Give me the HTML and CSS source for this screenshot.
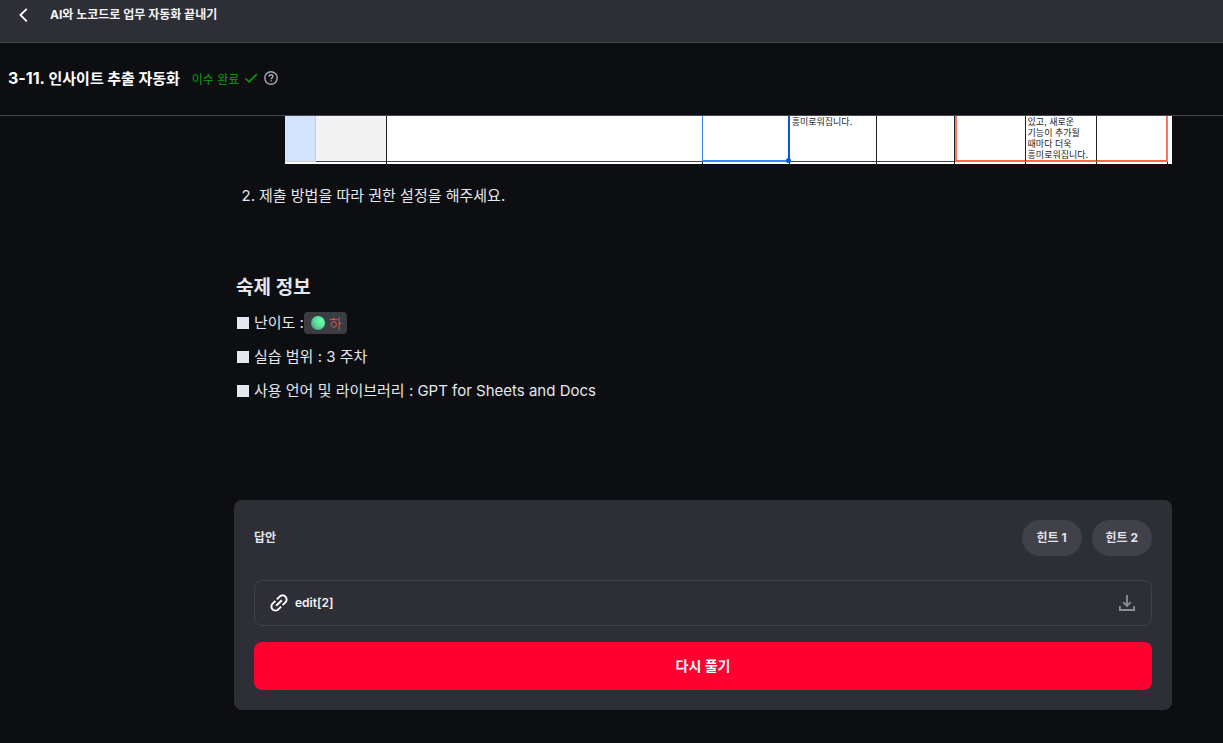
FILE: index.html
```html
<!DOCTYPE html>
<html lang="ko">
<head>
<meta charset="utf-8">
<meta name="viewport" content="width=device-width, initial-scale=1">
<title>AI와 노코드로 업무 자동화 끝내기</title>
<link rel="stylesheet" href="styles.css">
</head>
<body>
<header class="topbar">
  <button class="icon-button back" type="button" aria-label="뒤로">
    <svg width="20" height="20" viewBox="0 0 20 20" fill="none" stroke="#fff" stroke-width="1.8"><path d="M13.8 3.8 7.4 10l6.4 6.4"/></svg>
  </button>
  <span class="course">AI와 노코드로 업무 자동화 끝내기</span>
</header>
<section class="lesson">
  <h1 class="lesson-title"><span class="lesson-number">3-11.</span> 인사이트 추출 자동화</h1>
  <span class="status">이수 완료
    <svg width="14" height="14" viewBox="0 0 14 14" fill="none" stroke="#0ba00b" stroke-width="1.5"><path d="m1.4 7.3 3.6 3.6 7.8-7.8"/></svg>
  </span>
  <button class="icon-button help" type="button" aria-label="도움말">
    <svg width="14" height="14" viewBox="0 0 14 14" fill="none" stroke="#a9a9b4" stroke-width="1.4"><circle cx="7" cy="7" r="6.2"/><path d="M5.1 5.7c0-1.2.8-1.9 1.9-1.9s1.9.7 1.9 1.7c0 1.3-1.8 1.4-1.8 2.8M7.1 9.2v1.3"/></svg>
  </button>
</section>
<main class="content">
  <table class="sheet">
    <colgroup><col class="c-30"><col class="c-71"><col class="c-316"><col class="c-87"><col class="c-87"><col class="c-78"><col class="c-71"><col class="c-71"><col class="c-71"><col class="c-rest"></colgroup>
    <tr class="sheet-row">
      <td class="rownum"></td><td class="shade"></td><td class="before-picked"></td><td class="picked"></td><td>흥미로워집니다.</td><td></td><td class="red-left"></td><td class="red-mid">있고, 새로운<br>기능이 추가될<br>때마다 더욱<br>흥미로워집니다.</td><td class="red-right"></td><td class="blank"></td>
    </tr>
    <tr class="sheet-next"><td class="blank"></td><td></td><td></td><td></td><td></td><td></td><td></td><td></td><td></td><td class="blank"></td></tr>
  </table>
  <ol class="steps" start="2"><li>제출 방법을 따라 권한 설정을 해주세요.</li></ol>
  <section class="info">
    <h2 class="info-title">숙제 정보</h2>
    <ul class="facts">
      <li>난이도 :<code class="level"><svg width="14" height="14" viewBox="0 0 14 14"><defs><radialGradient id="g" cx=".7" cy=".35" r=".75"><stop offset="0" stop-color="#6dffad"/><stop offset=".5" stop-color="#5be49b"/><stop offset="1" stop-color="#4da47e"/></radialGradient></defs><circle cx="7" cy="7" r="7" fill="url(#g)"/></svg>하</code></li>
      <li>실습 범위 : 3 주차</li>
      <li>사용 언어 및 라이브러리 : GPT for Sheets and Docs</li>
    </ul>
  </section>
  <section class="answer">
    <div class="answer-head">
      <h3 class="answer-title">답안</h3>
      <div class="hints"><button class="hint" type="button">힌트 1</button><button class="hint" type="button">힌트 2</button></div>
    </div>
    <div class="file">
      <svg width="18" height="18" viewBox="3 3 18 18" fill="#fff"><path transform="rotate(-45 12 12)" d="M3.9 12c0-1.71 1.39-3.1 3.1-3.1h4V7H7c-2.76 0-5 2.24-5 5s2.24 5 5 5h4v-1.9H7c-1.71 0-3.1-1.39-3.1-3.1zM8 13h8v-2H8v2zm9-6h-4v1.9h4c1.71 0 3.1 1.39 3.1 3.1s-1.39 3.1-3.1 3.1h-4V17h4c2.76 0 5-2.24 5-5s-2.24-5-5-5z"/></svg>
      <a class="file-name" href="#">edit[2]</a>
      <button class="icon-button download" type="button" aria-label="다운로드">
        <svg width="16" height="16" viewBox="0 0 16 16" fill="none" stroke="#8e8e99" stroke-width="1.8"><path d="M8 0v11M4.2 7.2 8 11l3.8-3.8M.9 11v4h14.2v-4"/></svg>
      </button>
    </div>
    <button class="retry" type="button">다시 풀기</button>
  </section>
</main>
</body>
</html>
```
FILE: styles.css
```css
* { box-sizing: border-box; }
body {
  margin: 0;
  background: #0d0e12;
  color: #e4e8ee;
  font-family: Inter, "Noto Sans CJK KR", sans-serif;
  font-size: 15px;
}
button { font: inherit; cursor: pointer; }
.icon-button { display: flex; padding: 0; border: 0; background: none; }
.topbar {
  display: flex;
  gap: 17px;
  height: 43px;
  padding: 5px 13px;
  background: #2e2e37;
  border-bottom: 1px solid #46464d;
}
.course { font-size: 12px; font-weight: 700; line-height: 20px; color: #f4f4f6; }
.lesson {
  display: flex;
  align-items: center;
  height: 73px;
  padding: 0 8px 2px;
  border-bottom: 1px solid #46464d;
}
.lesson-title { margin: 0 12px 0 0; font-size: 15px; font-weight: 700; line-height: 24px; color: #fff; }
.lesson-number { font-size: 16px; }
.status { display: flex; align-items: center; gap: 5px; margin-right: 6px; font-size: 12px; color: #0ba00b; }

.content { padding: 0 51px 33px 234px; }
.sheet {
  width: calc(100% - 51px);
  margin-left: 51px;
  table-layout: fixed;
  border-collapse: separate;
  border-spacing: 0;
  background: #fff;
  color: #222;
  font-size: 9px;
  line-height: 11px;
}
.c-30 { width: 3.5%; }
.c-71 { width: 8%; }
.c-78 { width: 8.8%; }
.c-87 { width: 9.8%; }
.c-316 { width: 35.6%; }
.sheet td { padding: 0 2px; border-right: 1px solid #222; white-space: nowrap; vertical-align: top; }
.sheet-row td { height: 46px; border-bottom: 1px solid #444; }
.sheet-next td { height: 2px; }
.sheet .rownum { background: #d3e2fd; border-color: #ccc; }
.sheet .shade { background: #f3f3f3; }
.sheet .before-picked { border-right-color: #4285f4; }
.sheet .picked { position: relative; border-right: 2px solid #0b57d0; border-bottom: 2px solid #4285f4; }
.picked::after { content: ""; position: absolute; right: -3px; bottom: -3px; width: 5px; height: 5px; border-radius: 50%; background: #0b57d0; }
.sheet .red-left, .sheet .red-mid, .sheet .red-right { border-bottom: 2px solid #fb6650; }
.sheet .red-left { box-shadow: inset 2px 0 #fb7660; }
.sheet .red-right { border-right: 2px solid #fb7660; }
.sheet .blank { border-color: transparent; }

.steps { margin: 19px 0 0; padding-left: 25px; line-height: 26px; }
.info { padding: 63px 0 0 2px; }
.info-title { margin: 0; font-size: 19px; font-weight: 600; line-height: 32px; }
.facts { margin: 3px 0 0; padding: 0; list-style: none; }
.facts li { display: flex; align-items: center; height: 34px; padding-bottom: 2px; line-height: 20px; white-space: pre; }
.facts li::before { content: ""; width: 12px; height: 12px; margin: 0 5px 0 1px; background: #e4e8ee; }
.level {
  display: flex;
  align-items: center;
  gap: 4px;
  height: 22px;
  padding: 0 5px 0 7px;
  border-radius: 4px;
  background: #3b3c40;
  color: #eb5757;
  font: 300 14px "Noto Sans CJK KR", sans-serif;
}

.answer { margin-top: 91px; padding: 20px; border-radius: 8px; background: #2e2e37; }
.answer-head { display: flex; align-items: center; justify-content: space-between; }
.answer-title { margin: 0; padding-bottom: 3px; font-size: 12px; font-weight: 700; }
.hints { display: flex; gap: 10px; }
.hint { min-width: 60px; height: 36px; padding: 0 14px 3px; border: 0; border-radius: 18px; background: #41414a; color: #e4e4ea; font-size: 12px; font-weight: 700; }
.file {
  display: flex;
  align-items: center;
  height: 46px;
  margin: 24px 0 16px;
  padding: 0 16px 0 15px;
  border: 1px solid #41414a;
  border-radius: 8px;
}
.file-name { margin-left: 7px; padding-bottom: 1px; color: #f4f4f6; font-size: 12px; font-weight: 600; text-decoration: none; }
.download { margin-left: auto; }
.retry { display: block; width: 100%; height: 48px; padding: 0 0 2px; border: 0; border-radius: 8px; background: #ff0030; color: #fff; font-size: 14px; font-weight: 700; }
```
